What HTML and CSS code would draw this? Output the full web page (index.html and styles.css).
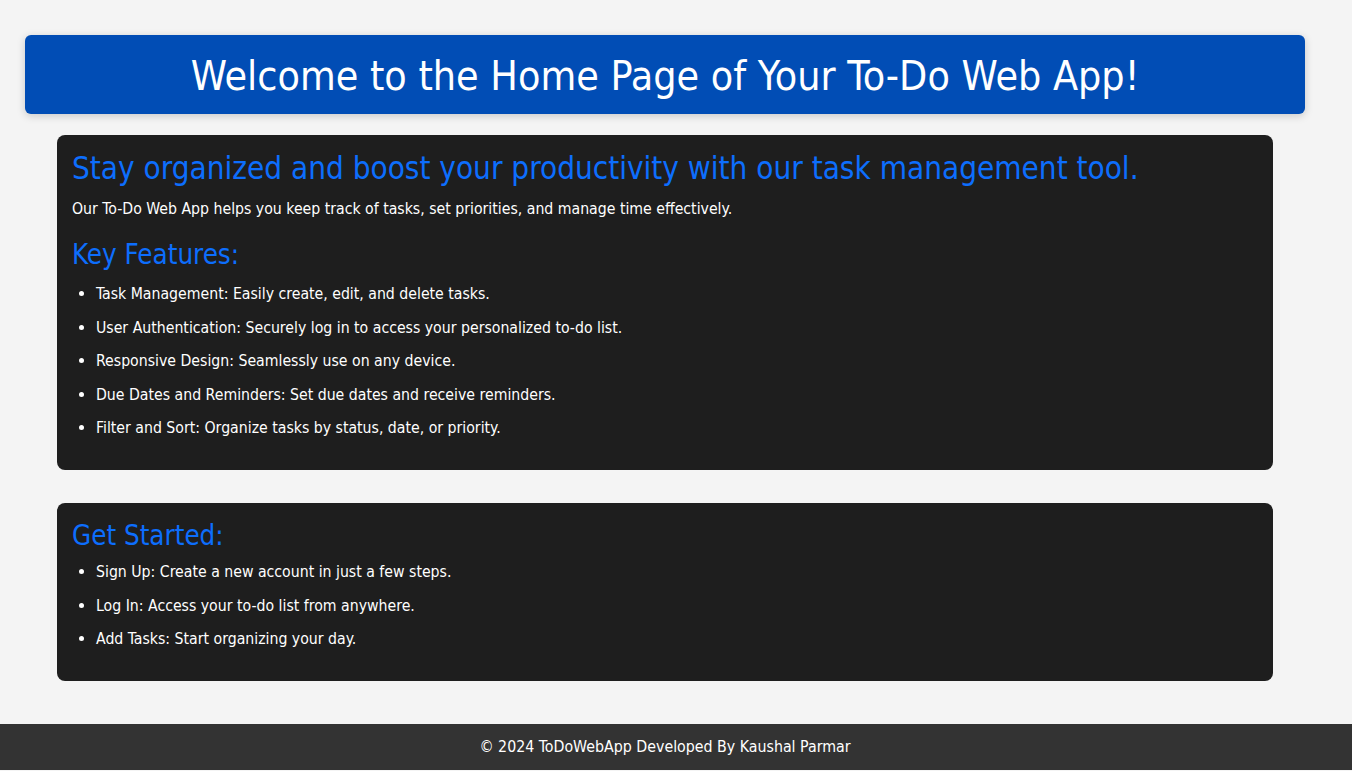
FILE: index.html
```html
<!DOCTYPE html>
<html lang="en">
<head>
<meta charset="utf-8">
<title>To-Do Web App</title>
<link rel="stylesheet" href="styles.css">
</head>
<body>
<header class="hero">
  <h1 class="hero-title">Welcome to the Home Page of Your To-Do Web App!</h1>
</header>
<main class="content">
  <section class="card">
    <h2 class="card-title">Stay organized and boost your productivity with our task management tool.</h2>
    <p class="card-text">Our To-Do Web App helps you keep track of tasks, set priorities, and manage time effectively.</p>
    <h3 class="card-subtitle">Key Features:</h3>
    <ul class="card-list">
      <li>Task Management: Easily create, edit, and delete tasks.</li>
      <li>User Authentication: Securely log in to access your personalized to-do list.</li>
      <li>Responsive Design: Seamlessly use on any device.</li>
      <li>Due Dates and Reminders: Set due dates and receive reminders.</li>
      <li>Filter and Sort: Organize tasks by status, date, or priority.</li>
    </ul>
  </section>
  <section class="card">
    <h3 class="card-subtitle first">Get Started:</h3>
    <ul class="card-list">
      <li>Sign Up: Create a new account in just a few steps.</li>
      <li>Log In: Access your to-do list from anywhere.</li>
      <li>Add Tasks: Start organizing your day.</li>
    </ul>
  </section>
</main>
<footer class="footer">&copy; 2024 ToDoWebApp Developed By Kaushal Parmar</footer>
</body>
</html>
```
FILE: styles.css
```css
html, body {
  margin: 0;
  padding: 0;
}
body {
  background: #f4f4f4;
  font-family: Tahoma, "DejaVu Sans Condensed", "DejaVu Sans", sans-serif;
  color: #ffffff;
}
.hero {
  width: 1280px;
  margin: 35px 0 0 25px;
  height: 79px;
  padding-top: 4px;
  box-sizing: border-box;
  background: #014db5;
  border-radius: 6px;
  box-shadow: 0 2px 8px rgba(0, 0, 0, 0.18);
  display: flex;
  align-items: center;
  justify-content: center;
}
.hero-title {
  margin: 0;
  font-size: 40.8px;
  font-weight: normal;
  line-height: 1;
}
.content {
  display: flex;
  flex-direction: column;
  gap: 33px;
  margin: 21px 0 0 57px;
  width: 1216px;
}
.card {
  background: #1e1e1e;
  border-radius: 8px;
  padding: 14px 15px 18px;
}
.card-title {
  margin: 0;
  font-size: 31.2px;
  font-weight: normal;
  color: #0d6efd;
  line-height: 38px;
}
.card-text {
  margin: 12px 0 0;
  font-size: 15.7px;
  line-height: 19px;
}
.card-subtitle {
  margin: 20px 0 0;
  font-size: 27.5px;
  font-weight: normal;
  color: #0d6efd;
  line-height: 33px;
}
.card-subtitle.first {
  margin-top: 2.5px;
}
.card-list {
  margin: 13px 0 0;
  padding-left: 24px;
  font-size: 15.7px;
  line-height: 19px;
}
.card-subtitle.first + .card-list {
  margin-top: 10px;
}
.card-list li {
  margin-bottom: 14.5px;
}
.footer {
  margin-top: 43px;
  height: 46px;
  padding-right: 22px;
  background: #333333;
  display: flex;
  align-items: center;
  justify-content: center;
  font-size: 15.8px;
}
```
